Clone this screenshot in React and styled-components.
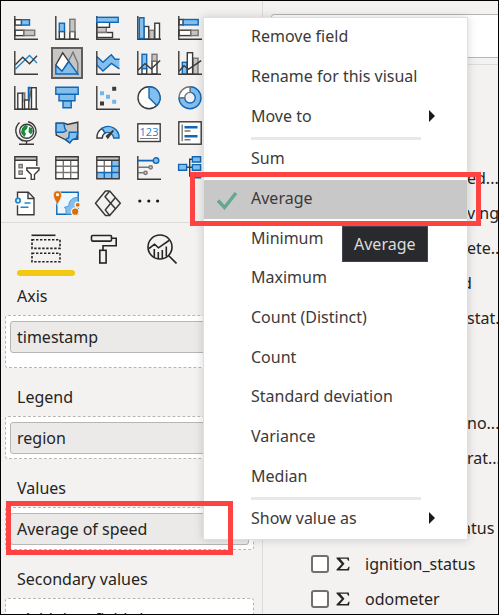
import React from "react";
import styled, { createGlobalStyle, css } from "styled-components";

const GlobalStyle = createGlobalStyle`
  *, *::before, *::after { box-sizing: border-box; }
  body { margin: 0; background: #f3f2f1; }
  body, button, input {
    font-family: "Noto Sans", "Open Sans", sans-serif;
    font-size: 16px;
    color: #252423;
  }
  button { margin: 0; padding: 0; border: 0; background: none; text-align: left; cursor: pointer; }
`;

const INK = "#3b3a39";
const BLUE = "#83beec";
const NAVY = "#1068b5";
const GREY = "#c8c6c4";
const STEEL = "#797775";
const ORANGE = "#e06c00";

/* ---------- layout ---------- */

const Frame = styled.div`
  position: relative;
  display: grid;
  grid-template-columns: 262px minmax(0, 1fr);
  height: 100vh;
  overflow: hidden;
  border: 1px solid #000;
  background: #f3f2f1;
`;

const VisualPane = styled.section`
  border-right: 1px solid #dddbd9;
  overflow: hidden;
`;

const Gallery = styled.div`
  display: grid;
  grid-template-columns: repeat(5, 24px);
  grid-auto-rows: 24px;
  gap: 11px 17px;
  padding: 15px 13px 7px;
  border-bottom: 1px solid #dddbd9;
`;

const VisualButton = styled.button`
  display: grid;
  place-items: center;
  svg { display: block; width: 24px; height: 24px; overflow: visible; }
  ${(p) => p.$selected && css`
    margin: -4px;
    background: #c8c6c4;
    border: 2px solid #605e5c;
  `}
`;

const Tabs = styled.div`
  display: flex;
  padding: 11px 16px 1px;
`;

const Tab = styled.button`
  display: flex;
  flex-direction: column;
  align-items: center;
  gap: 6px;
  width: 58px;
  svg { display: block; width: 30px; height: 30px; }
  &::after {
    content: "";
    width: 100%;
    height: 6px;
    border-radius: 3px;
    background: ${(p) => (p.$active ? "#f2c811" : "transparent")};
  }
`;

const Bucket = styled.section`
  margin: 0 8px 10px 4px;
`;

const BucketTitle = styled.h3`
  margin: 0;
  padding-left: 12px;
  font-size: 16px;
  font-weight: 400;
  line-height: 38px;
`;

const Well = styled.div`
  min-height: ${(p) => (p.$roomy ? 53 : 43)}px;
  padding: 5px 4px 4px;
  border: 1px dashed #b8b6b4;
  border-radius: 3px;
  background: #fff;
`;

const Chip = styled.button`
  display: block;
  width: 100%;
  padding-left: 6px;
  line-height: 30px;
  border: 1px solid #b8b6b4;
  border-radius: 3px;
  background: #ebeae9;
`;

const Placeholder = styled.span`
  display: block;
  padding-left: 13px;
  line-height: 30px;
  white-space: nowrap;
`;

const FieldPane = styled.section`
  overflow: hidden;
`;

const SearchBar = styled.div`
  height: 64px;
  padding: 13px 0 0 8px;
  border-bottom: 1px solid #dddbd9;
`;

const SearchInput = styled.input`
  display: block;
  width: calc(100% + 8px);
  height: 44px;
  border: 1px solid #b8b6b4;
  border-radius: 3px;
  background: #fff;
`;

const FieldList = styled.ul`
  display: grid;
  grid-auto-rows: 35px;
  margin: 0;
  padding: 96px 0 0;
  list-style: none;
`;

const FieldTail = styled.li`
  padding-left: ${(p) => (p.$tucked ? 199 : 204)}px;
  line-height: 35px;
  white-space: nowrap;
`;

const FieldRow = styled.li`
  display: flex;
  align-items: center;
  padding-left: 48px;
  white-space: nowrap;
`;

const FieldLabel = styled.label`
  display: flex;
  align-items: center;
`;

const Tick = styled.input`
  appearance: none;
  width: 18px;
  height: 18px;
  margin: 0 7px 0 0;
  border: 2px solid #72706e;
  border-radius: 3px;
  background: #fff;
`;

const Sigma = styled.svg`
  width: 14px;
  height: 14px;
  margin-right: 15px;
`;

/* ---------- overlays ---------- */

const Menu = styled.div`
  position: absolute;
  left: 202px;
  top: 16px;
  width: 265px;
  border: 1px solid #e1dfdd;
  background: #fff;
  box-shadow: 0 0 9px rgba(0, 0, 0, 0.16);
`;

const MenuGroup = styled.div`
  display: grid;
  grid-auto-rows: 1fr;
  min-height: ${(p) => p.$height}px;
`;

const MenuItem = styled.button`
  display: grid;
  grid-template-columns: 47px 1fr 39px;
  align-items: center;
  width: 100%;
  min-height: 39px;
  padding-bottom: 3px;
  line-height: 22px;
  color: #3b3a39;
  background: ${(p) => (p.$checked ? "#c8c8c8" : "transparent")};
  svg { display: block; }
`;

const CheckMark = styled.svg`
  width: 22px;
  height: 20px;
  margin: 4px 0 0 12px;
`;

const Arrow = styled.svg`
  width: 8px;
  height: 12px;
`;

const Separator = styled.hr`
  height: 3px;
  margin: 0 46px 0 47px;
  border: 0;
  background: #e9e8e7;
`;

const Tooltip = styled.div`
  position: absolute;
  left: 341px;
  top: 225px;
  padding: 0 11px;
  border: 1px solid #45434f;
  background: #292a2d;
  color: #dcdcdc;
  line-height: 34px;
`;

const Highlight = styled.div`
  position: absolute;
  border: 5px solid #ff4343;
  pointer-events: none;
`;

const MenuHighlight = styled(Highlight)`
  left: 189px;
  top: 171px;
  width: 291px;
  height: 54px;
`;

const ValueHighlight = styled(Highlight)`
  left: 5px;
  top: 500px;
  width: 227px;
  height: 54px;
`;

/* ---------- drawings ---------- */

const Art = ({ children }) => (
  <svg viewBox="0 0 24 24" fill="none" strokeWidth="1.4" aria-hidden="true">{children}</svg>
);
const Axes = () => <path d="M.8 0v23.2H24" stroke={INK} />;
const tones = {
  blue: { fill: BLUE, stroke: NAVY },
  grey: { fill: GREY, stroke: STEEL },
  white: { fill: "#fff", stroke: INK },
};
const Bar = ({ x, y, w, h, tone }) => <rect x={x} y={y} width={w} height={h} {...tones[tone]} />;

const visuals = [
  ["Stacked bar chart", <><Bar x={1} y={3.7} w={6.5} h={5.4} tone="white" /><Bar x={7.5} y={3.7} w={8} h={5.4} tone="blue" /><Bar x={1} y={14.2} w={9} h={5.4} tone="white" /><Bar x={10} y={14.2} w={10.7} h={5.4} tone="grey" /><Axes /></>],
  ["Stacked column chart", <><Bar x={4.3} y={15.5} w={5.2} h={7.5} tone="white" /><Bar x={4.3} y={7.2} w={5.2} h={8.3} tone="blue" /><Bar x={14.8} y={15.5} w={5.2} h={7.5} tone="white" /><Bar x={14.8} y={3.3} w={5.2} h={12.2} tone="grey" /><Axes /></>],
  ["Clustered bar chart", <><Bar x={.8} y={16.5} w={15.7} h={5} tone="white" /><Bar x={.8} y={11.3} w={9.5} h={5} tone="grey" /><Bar x={.8} y={6.3} w={12.7} h={5} tone="white" /><Axes /><Bar x={.8} y={1.3} w={21.4} h={5} tone="blue" /></>],
  ["Clustered column chart", <><Bar x={7} y={10.5} w={4.7} h={12.7} tone="white" /><Bar x={12.5} y={14.3} w={4.7} h={8.9} tone="grey" /><Bar x={17.8} y={7.2} w={4.7} h={16} tone="white" /><Axes /><Bar x={2.3} y={1.7} w={4.7} h={20.8} tone="blue" /></>],
  ["100% stacked bar chart", <><Bar x={1} y={3.5} w={4.2} h={5.4} tone="white" /><Bar x={5.2} y={3.5} w={15} h={5.4} tone="blue" /><Bar x={1} y={14.2} w={12} h={5.4} tone="white" /><Bar x={13} y={14.2} w={7.2} h={5.4} tone="grey" /><Axes /></>],
  ["Line chart", <><Axes /><path d="M1.3 18.3 15.5 4.6 23 12" stroke="#2186d0" /><path d="M1.3 13.7 8.7 6.3l6.8 6.4L23 4.7" stroke={INK} /></>],
  ["Area chart", <><path d="M13.5 10 18 1.2l4.8 11V23L13 15z" {...tones.grey} /><path d="M.8 14 7.7 1.8l6 8.6L7 20.5z" {...tones.white} /><path d="M.8 14.5 7 20.3l6.8-9.8L22.9 23H.8z" {...tones.blue} /></>],
  ["Stacked area chart", <><path d="M.8 5.5 7 11.3l8.3-7.6 3.8 4.6H23.4V17.8L15.4 12.5 7 20 .8 14z" fill={BLUE} /><path d="M.8 5.5 7 11.3l8.3-7.6 3.8 4.6h4.4M.8 14 7 20l8.4-7.6 8 5.4" stroke={NAVY} /><Axes /></>],
  ["Line and stacked column chart", <><Bar x={5} y={17.5} w={4.7} h={5.7} tone="white" /><Bar x={5} y={3.3} w={4.7} h={14.2} tone="blue" /><Bar x={15} y={10} w={5} h={13} tone="white" /><Bar x={15} y={3.3} w={5} h={6.7} tone="grey" /><Axes /><path d="m1 19.3 7-6.7 6.2 5.2 9-8.2" stroke={INK} /></>],
  ["Line and clustered column chart", <><Bar x={4.3} y={11.3} w={4.8} h={11.9} tone="blue" /><Bar x={15} y={7.2} w={5} h={16} tone="grey" /><Bar x={9.3} y={1.7} w={5.3} h={21.5} tone="white" /><Axes /><path d="m1 20.3 5-5.5 4.7 3.4L23.2 9.6" stroke={INK} /></>],
  ["Ribbon chart", <><path d="M8 7.2h2.5v7.5h4.2L18 1.5" stroke={STEEL} strokeWidth="2" /><Bar x={3.8} y={7.2} w={4.6} h={16} tone="white" /><Bar x={10.5} y={14} w={4.3} h={9.2} tone="white" /><Bar x={17.5} y={1.7} w={4.7} h={21.5} tone="white" /><Axes /><path d="M14.7 14V1.7h2.5" stroke={NAVY} strokeWidth="2" /></>],
  ["Funnel", <g {...tones.blue}><path d="M8 14.7h8.2v7H8z" /><path d="M4 8.2h16v6.5H4z" /><path d="M.8 1.2h22.4v7H.8z" /></g>],
  ["Scatter chart", <><Axes /><path d="M16.2.8h4v4h-4zM4 15.5h4v4H4z" fill={INK} /><path d="M4 5.3h4v4H4zM10 8.8h4v4h-4zM16.2 13.8h4v4h-4z" fill="#72b5ea" /></>],
  ["Pie chart", <><circle cx="12" cy="11.7" r="11" {...tones.white} /><path d="M12 .7a11 11 0 0 1 7.8 18.8L12 11.7z" {...tones.blue} /></>],
  ["Donut chart", <><path d="M12 .7a11 11 0 1 1-11 11h5.7A5.3 5.3 0 1 0 12 6.4z" {...tones.blue} /><path d="M1 11.7a11 11 0 0 1 11-11v5.7a5.3 5.3 0 0 0-5.3 5.3z" fill="#fff" stroke={STEEL} /></>],
  ["Map", <><circle cx="12.7" cy="10.3" r="7" {...tones.white} /><path d="M8 7.2 11 4l3 .7-1 3-2.5 2.5L12 13l-1.6 3L7 12zM15 6l3 1 .9 3.4-2 3-2.4-2.3z" fill="#1b8a3c" /><path d="M14 .8a9.7 9.7 0 1 1-9.2 15.7M5.5 1.5A11 11 0 0 0 9 20M12.5 20v3M5 23.2h15" stroke={INK} /></>],
  ["Filled map", <><path d="M9 2.2 12.5 3.5 22.8 1.2V18L17 18.5 14.5 21.7 10 18.5 1.2 14V2.2z" fill={GREY} stroke={INK} /><path d="M1.2 2.2h7.6l1 5.2 1.5 2.3-3 1.6H1z" fill={BLUE} stroke={NAVY} /><path d="M14.2 11.2h8.6l-1.4 6-4 1.3-2.4 3.2-4.4-3.4 3.2-1.6z" fill={BLUE} stroke={NAVY} /></>],
  ["Gauge", <><path d="M.9 17A11 11 0 0 1 6 7.3L9.2 12a6 6 0 0 0-2.9 5z" {...tones.white} /><path d="M6 7.3A11 11 0 0 1 23 17h-5.3a6 6 0 0 0-8.5-5z" {...tones.blue} /><path d="m17.3 9.5-6.8 5.7 1.3 1.8z" fill={INK} stroke={INK} /></>],
  ["Card", <><rect x=".8" y="2.8" width="22.4" height="17.7" {...tones.white} /><text x="12" y="14.8" fontSize="11" textAnchor="middle" fill="#2186d0" fontFamily="Open Sans, sans-serif">123</text><path d="M3 17.5h18" stroke={STEEL} strokeWidth="1" /></>],
  ["Multi-row card", <><rect x=".8" y=".8" width="22.4" height="22.4" {...tones.white} /><path d="M4.2 3.5v16.8" stroke={STEEL} /><path d="M6.5 6.3h13M6.5 15.3h13" stroke={NAVY} strokeWidth="2.4" /><path d="M6.5 10h6M6.5 18.8h6" stroke={STEEL} /></>],
  ["Slicer", <><path d="M.8.8h22v21.7H.8z" fill="#fff" /><path d="M.8.8h22v3.4H.8z" fill={GREY} /><path d="M22.8 10V.8H.8v21.6H12M.8 4.2h22" stroke={INK} /><path d="M5 8.5h3.3v3.3H5zM5 15h3.3v3.3H5z" {...tones.grey} /><path d="M12.8 12H25v2l-4.5 4.6v4.8h-3.3v-4.8l-4.4-4.5z" {...tones.white} /></>],
  ["Table", <><rect x=".8" y=".8" width="22.4" height="22" fill="#fff" /><path d="M.8.8h22.4v3.4H.8z" fill={GREY} /><path d="M1 10.3h22M1 16.5h22M8.3 4.5v18M15.7 4.5v18" stroke={STEEL} /><path d="M.8.8h22.4v22H.8zM.8 4.3h22.4" stroke={INK} /></>],
  ["Matrix", <><rect x=".8" y=".8" width="22.4" height="22" fill="#fff" /><path d="M.8.8h22.4v3.4H.8z" fill={GREY} /><path d="M15.7 4.5h7.2v18H1v-6h14.7z" fill={BLUE} /><path d="M1 10.3h14.7M8.3 4.5v12" stroke={STEEL} /><path d="M15.7 10.3H23M1 16.5h22M8.3 16.5v6M15.7 4.5v18" stroke={NAVY} /><path d="M.8.8h22.4v22H.8zM.8 4.3h22.4" stroke={INK} /></>],
  ["Key influencers", <><Axes /><path d="M1 4.6h15" stroke={NAVY} strokeWidth="1.8" /><circle cx="19" cy="4.6" r="2.8" {...tones.blue} /><path d="M1 11.3h11M1 16.8h5.5" stroke={STEEL} /><circle cx="13.7" cy="11.3" r="1.7" fill={GREY} stroke={STEEL} /><circle cx="8.5" cy="16.8" r="1.7" fill={GREY} stroke={STEEL} /></>],
  ["Decomposition tree", <><path d="M8.5 11.2H14M14 3.3h-2.3v16.8H14" stroke={INK} /><g {...tones.blue}><path d="M.6 8.4h8v5.8h-8zM14.4.8h8.2V6h-8.2zM14.4 8.6h8.2v5.6h-8.2zM14.4 17h8.2v4.8h-8.2z" /></g></>],
  ["Paginated report", <><path d="M3.5 7V1.3h10.8L20 7v16.7H3.5v-9.5" {...tones.white} /><path d="M14 1.5v6h6" stroke={INK} /><circle cx="4" cy="9.6" r="2.2" fill="#fff" stroke="#2186d0" strokeWidth="1.8" /><path d="M10.5 12h6M6.5 16.2h8" stroke="#2186d0" /></>],
  ["ArcGIS map", <><path d="M1.8 1.3h21.4v22H1.8z" fill="#eef6fd" stroke={NAVY} /><path d="M11 23v-4.5l-1.5-2.3 4-1 1.3-5 3.4-3 4.6-1V23z" fill={BLUE} stroke="#4e9edb" strokeWidth="1" /><path d="M2.5 14.5C1.8 11-1.5 8.5-1.5 3.8a4 4 0 0 1 8 0c0 4.700-3.300 7.200-4 10.700z" fill={ORANGE} stroke="#f3f2f1" strokeWidth=".6" /><circle cx="2.5" cy="3.7" r="1.6" fill="#fff" /><circle cx="20.2" cy="20.700" r="3.8" fill={ORANGE} stroke="#f3f2f1" /><circle cx="22.7" cy="13.8" r="2.600" fill={ORANGE} stroke="#f3f2f1" /></>],
  ["Power Apps", <g stroke={INK} strokeWidth="1.5" strokeLinejoin="round"><path d="M13.700 0H9.500L-.5 12.300l10 12.200h4.200" /><path d="M13.700 0 24.300 12.300 13.700 24.500l-4.500-5.600 10.200-12.300" /><path d="M13.700 0 9 5.700l10.700 12.300" /></g>],
  ["Get more visuals", <g fill="#1b1a19"><circle cx="2.8" cy="10" r="1.6" /><circle cx="11.8" cy="10" r="1.6" /><circle cx="20.6" cy="10" r="1.6" /></g>],
];

const FieldsIcon = () => (
  <svg viewBox="0 0 30 30" fill="none" stroke="#252423" strokeWidth="1.6" aria-hidden="true">
    <path d="M.5 1.3h24" />
    <path d="M1 5.8h28v8.6H1zM1 19.2h28v8.6H1z" strokeDasharray="2.4 1.6" />
  </svg>
);
const FormatIcon = () => (
  <svg viewBox="0 0 30 30" fill="none" stroke="#252423" strokeWidth="1.6" aria-hidden="true">
    <rect x="2.5" y="1.5" width="20" height="5.6" rx="1" />
    <path d="M22.5 4.3h4.7v7.5H14v4.5" />
    <rect x="10.8" y="16.3" width="6.3" height="12.7" />
  </svg>
);
const AnalyticsIcon = () => (
  <svg viewBox="0 0 30 30" fill="none" stroke="#252423" strokeWidth="1.6" aria-hidden="true">
    <circle cx="13" cy="13" r="12" />
    <path d="m21.5 21.5 8 8M2 14.5l5.5-4.3 4 3.6L22 6.5M7.3 15v8M11.3 18v7M15.3 16v8.5M19.3 12.5v10" />
  </svg>
);

const buckets = [
  { title: "Axis", value: "timestamp", roomy: true },
  { title: "Legend", value: "region" },
  { title: "Values", value: "Average of speed" },
  { title: "Secondary values", placeholder: "Add data fields here" },
];

const fieldTails = [
  "ed...", "ving", "ete...", "d", "stat...", "", "", "no...", "rat...", "", "atus",
];
const fields = ["ignition_status", "odometer"];

const menuGroups = [
  { height: 119, items: [{ text: "Remove field" }, { text: "Rename for this visual" }, { text: "Move to", more: true }] },
  {
    height: 357,
    items: [
      { text: "Sum" }, { text: "Average", checked: true }, { text: "Minimum" }, { text: "Maximum" },
      { text: "Count (Distinct)" }, { text: "Count" }, { text: "Standard deviation" },
      { text: "Variance" }, { text: "Median" },
    ],
  },
  { height: 39, items: [{ text: "Show value as", more: true }] },
];

export default function App() {
  return (
    <>
      <GlobalStyle />
      <Frame>
        <VisualPane aria-label="Visualizations">
          <Gallery>
            {visuals.map(([name, art]) => (
              <VisualButton key={name} type="button" aria-label={name} $selected={name === "Area chart"}>
                <Art>{art}</Art>
              </VisualButton>
            ))}
          </Gallery>
          <Tabs role="tablist">
            <Tab type="button" role="tab" aria-label="Fields" aria-selected="true" $active><FieldsIcon /></Tab>
            <Tab type="button" role="tab" aria-label="Format" aria-selected="false"><FormatIcon /></Tab>
            <Tab type="button" role="tab" aria-label="Analytics" aria-selected="false"><AnalyticsIcon /></Tab>
          </Tabs>
          {buckets.map((b) => (
            <Bucket key={b.title}>
              <BucketTitle>{b.title}</BucketTitle>
              <Well $roomy={b.roomy}>
                {b.value ? <Chip type="button">{b.value}</Chip> : <Placeholder>{b.placeholder}</Placeholder>}
              </Well>
            </Bucket>
          ))}
        </VisualPane>

        <FieldPane aria-label="Fields">
          <SearchBar><SearchInput type="search" aria-label="Search" /></SearchBar>
          <FieldList>
            {fieldTails.map((t, i) => (
              <FieldTail key={i} $tucked={t === "d" || t === "atus"}>{t}</FieldTail>
            ))}
            {fields.map((f) => (
              <FieldRow key={f}>
                <FieldLabel>
                  <Tick type="checkbox" />
                  <Sigma viewBox="0 0 14 14" aria-hidden="true">
                    <path d="M.5.5h12.3l.4 3.3h-1L11 1.8H4.2l4.3 4.9-4.6 5.2h7.3l1.4-2.2h1l-.6 3.8H.5v-.9l5.2-5.7L.5 1.4z" fill="#252423" />
                  </Sigma>
                  {f}
                </FieldLabel>
              </FieldRow>
            ))}
          </FieldList>
        </FieldPane>

        <Menu role="menu">
          {menuGroups.map((g, i) => (
            <React.Fragment key={g.height}>
              {i > 0 && <Separator />}
              <MenuGroup $height={g.height}>
                {g.items.map((it) => (
                  <MenuItem key={it.text} type="button" role="menuitem" $checked={it.checked}>
                    {it.checked ? (
                      <CheckMark viewBox="0 0 22 20" fill="none" aria-hidden="true">
                        <path d="m2 10.5 6.500 7L20 3" stroke="#64a891" strokeWidth="3.4" />
                      </CheckMark>
                    ) : <span />}
                    <span>{it.text}</span>
                    {it.more && (
                      <Arrow viewBox="0 0 8 12" aria-hidden="true"><path d="m1 0 6 6-6 6z" fill="#1b1a19" /></Arrow>
                    )}
                  </MenuItem>
                ))}
              </MenuGroup>
            </React.Fragment>
          ))}
        </Menu>
        <Tooltip role="tooltip">Average</Tooltip>
        <MenuHighlight />
        <ValueHighlight />
      </Frame>
    </>
  );
}
